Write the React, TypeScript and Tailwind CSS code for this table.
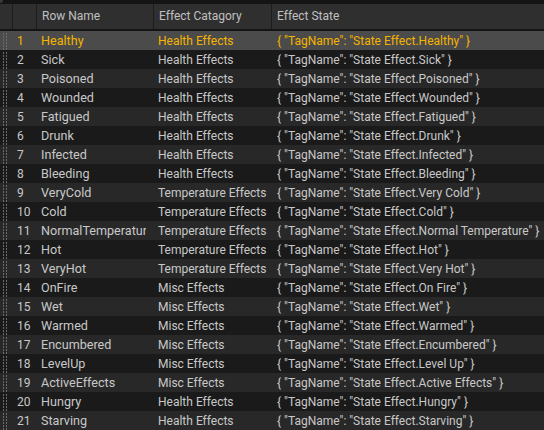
import React from "react";

const rows: [string, string, string][] = [
  ["Healthy", "Health Effects", "Healthy"],
  ["Sick", "Health Effects", "Sick"],
  ["Poisoned", "Health Effects", "Poisoned"],
  ["Wounded", "Health Effects", "Wounded"],
  ["Fatigued", "Health Effects", "Fatigued"],
  ["Drunk", "Health Effects", "Drunk"],
  ["Infected", "Health Effects", "Infected"],
  ["Bleeding", "Health Effects", "Bleeding"],
  ["VeryCold", "Temperature Effects", "Very Cold"],
  ["Cold", "Temperature Effects", "Cold"],
  ["NormalTemperature", "Temperature Effects", "Normal Temperature"],
  ["Hot", "Temperature Effects", "Hot"],
  ["VeryHot", "Temperature Effects", "Very Hot"],
  ["OnFire", "Misc Effects", "On Fire"],
  ["Wet", "Misc Effects", "Wet"],
  ["Warmed", "Misc Effects", "Warmed"],
  ["Encumbered", "Misc Effects", "Encumbered"],
  ["LevelUp", "Misc Effects", "Level Up"],
  ["ActiveEffects", "Misc Effects", "Active Effects"],
  ["Hungry", "Health Effects", "Hungry"],
  ["Starving", "Health Effects", "Starving"],
];

function Handle() {
  const ys = [2, 5, 8, 11, 14, 17];
  return (
    <svg width="13" height="19" viewBox="0 0 13 19">
      {ys.map((y) => (
        <g key={y}>
          <rect x="3" y={y} width="1" height="2" fill="#6a6a6a" />
          <rect x="6" y={y} width="1" height="2" fill="#6a6a6a" />
        </g>
      ))}
    </svg>
  );
}

export default function App() {
  return (
    <div
      className="w-[544px] h-[430px] overflow-hidden bg-[#1a1a1a] text-[12px] text-[#c8c8c8]"
      style={{ fontFamily: "Roboto, 'Liberation Sans', sans-serif" }}
    >
      <div className="h-[4px] bg-[#141414] relative">
        <div className="absolute left-0 top-0 w-[3px] h-[3px] bg-[#3a3a3a] rounded-br-[3px]" />
      </div>
      <div className="grid grid-cols-[13px_24px_117px_118px_1fr] h-[25px] bg-[#2f2f2f] text-[#c0c0c0]">
        <div className="border-r border-[#1c1c1c]" />
        <div className="border-r border-[#1c1c1c]" />
        <div className="border-r border-[#1c1c1c] flex items-center pl-[5px] pb-[1px]">Row Name</div>
        <div className="border-r border-[#1c1c1c] flex items-center pl-[5px] pb-[1px]">Effect Catagory</div>
        <div className="flex items-center pl-[5px] pb-[1px]">Effect State</div>
      </div>
      <div className="h-[2px] bg-[#141414]" />
      {rows.map(([name, cat, state], i) => {
        const sel = i === 0;
        const bg = sel ? "bg-[#4b4b4b]" : i % 2 === 1 ? "bg-[#1a1a1a]" : "bg-[#282828]";
        const color = sel ? "text-[#f4b400]" : "text-[#c8c8c8]";
        return (
          <div
            key={i}
            className={`grid grid-cols-[13px_24px_117px_118px_1fr] h-[19px] items-center ${bg} ${color}`}
          >
            <div className="h-[19px]">
              <Handle />
            </div>
            <div className="pl-[4px] whitespace-nowrap">{i + 1}</div>
            <div className="pl-[4px] pr-[8px] pt-[1px] min-w-0">
              <div className="whitespace-nowrap overflow-hidden text-[12.6px] leading-[16px]">{name}</div>
            </div>
            <div className="pl-[4px] whitespace-nowrap overflow-hidden">{cat}</div>
            <div className="pl-[5px] whitespace-nowrap overflow-hidden">
              {`{ "TagName": "State Effect.${state}" }`}
            </div>
          </div>
        );
      })}
    </div>
  );
}
